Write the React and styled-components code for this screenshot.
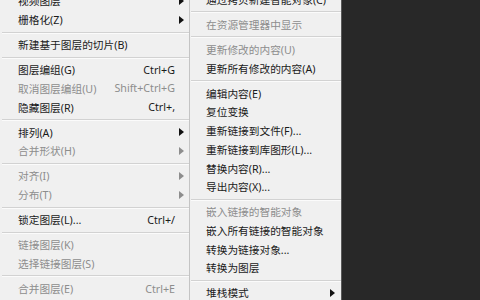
import React from "react";
import styled, { createGlobalStyle } from "styled-components";

const GlobalStyle = createGlobalStyle`
  html, body {
    margin: 0;
    padding: 0;
    background: #282828;
    overflow: hidden;
  }
  #root {
    width: 480px;
    height: 300px;
  }
`;

const leftItems = [
  { label: "视频图层", arrow: true },
  { label: "栅格化(Z)", arrow: true },
  "sep",
  { label: "新建基于图层的切片(B)" },
  "sep",
  { label: "图层编组(G)", shortcut: "Ctrl+G" },
  { label: "取消图层编组(U)", shortcut: "Shift+Ctrl+G", disabled: true },
  { label: "隐藏图层(R)", shortcut: "Ctrl+," },
  "sep",
  { label: "排列(A)", arrow: true },
  { label: "合并形状(H)", arrow: true, disabled: true },
  "sep",
  { label: "对齐(I)", arrow: true, disabled: true },
  { label: "分布(T)", arrow: true, disabled: true },
  "sep",
  { label: "锁定图层(L)...", shortcut: "Ctrl+/" },
  "sep",
  { label: "链接图层(K)", disabled: true },
  { label: "选择链接图层(S)", disabled: true },
  "sep",
  { label: "合并图层(E)", shortcut: "Ctrl+E", disabled: true },
];

const rightItems = [
  { label: "通过拷贝新建智能对象(C)" },
  "sep",
  { label: "在资源管理器中显示", disabled: true },
  "sep",
  { label: "更新修改的内容(U)", disabled: true },
  { label: "更新所有修改的内容(A)" },
  "sep",
  { label: "编辑内容(E)" },
  { label: "复位变换" },
  { label: "重新链接到文件(F)..." },
  { label: "重新链接到库图形(L)..." },
  { label: "替换内容(R)..." },
  { label: "导出内容(X)..." },
  "sep",
  { label: "嵌入链接的智能对象", disabled: true },
  { label: "嵌入所有链接的智能对象" },
  { label: "转换为链接对象..." },
  { label: "转换为图层" },
  "sep",
  { label: "堆栈模式", arrow: true },
];

const Screen = styled.div`
  display: flex;
  width: 480px;
  height: 300px;
  overflow: hidden;
  background: #282828;
  font-family: "Noto Sans", "Noto Sans CJK SC", sans-serif;
`;

const Menu = styled.div`
  flex: 0 0 ${(p) => p.$width}px;
  height: 300px;
  box-sizing: border-box;
  background: #f0f0f0;
  border-right: 1px solid ${(p) => p.$edge};
  overflow: hidden;
`;

const List = styled.div`
  display: flex;
  flex-direction: column;
  margin-top: ${(p) => p.$shift}px;
`;

const Row = styled.div`
  flex: 0 0 18.7px;
  display: flex;
  align-items: center;
  padding: 0 ${(p) => p.$right}px 0 ${(p) => p.$indent}px;
  font-size: 10.7px;
  color: ${(p) => (p.$disabled ? "#8d8d8d" : "#1a1a1a")};
  white-space: nowrap;
`;

const Label = styled.span`
  flex: 1;
`;

const Shortcut = styled.span`
  margin-right: ${(p) => p.$gap}px;
`;

const Arrow = styled.span`
  width: 0;
  height: 0;
  border-top: 4px solid transparent;
  border-bottom: 4px solid transparent;
  border-left: 5px solid ${(p) => (p.$disabled ? "#8d8d8d" : "#111")};
`;

const Sep = styled.div`
  flex: 0 0 6.4px;
  display: flex;
  align-items: center;
  padding-left: ${(p) => p.$from}px;
  &::after {
    content: "";
    flex: 1;
    height: 1px;
    background: #d2d2d2;
    box-shadow: 0 1px 0 #fbfbfb;
  }
`;

const MenuList = ({ items, shift, indent, right, gap, from }) => (
  <List $shift={shift}>
    {items.map((it, i) =>
      it === "sep" ? (
        <Sep key={i} $from={from} />
      ) : (
        <Row key={i} $disabled={it.disabled} $indent={indent} $right={right}>
          <Label>{it.label}</Label>
          {it.shortcut && <Shortcut $gap={gap}>{it.shortcut}</Shortcut>}
          {it.arrow && <Arrow $disabled={it.disabled} />}
        </Row>
      )
    )}
  </List>
);

export default function App() {
  return (
    <>
      <GlobalStyle />
      <Screen>
        <Menu $width={190} $edge="#c4c4c4">
          <MenuList items={leftItems} shift={-8.5} indent={18} right={5} gap={9} from={2} />
        </Menu>
        <Menu $width={152} $edge="#5a5a5a">
          <MenuList items={rightItems} shift={-10} indent={16} right={6} gap={9} from={1} />
        </Menu>
      </Screen>
    </>
  );
}
